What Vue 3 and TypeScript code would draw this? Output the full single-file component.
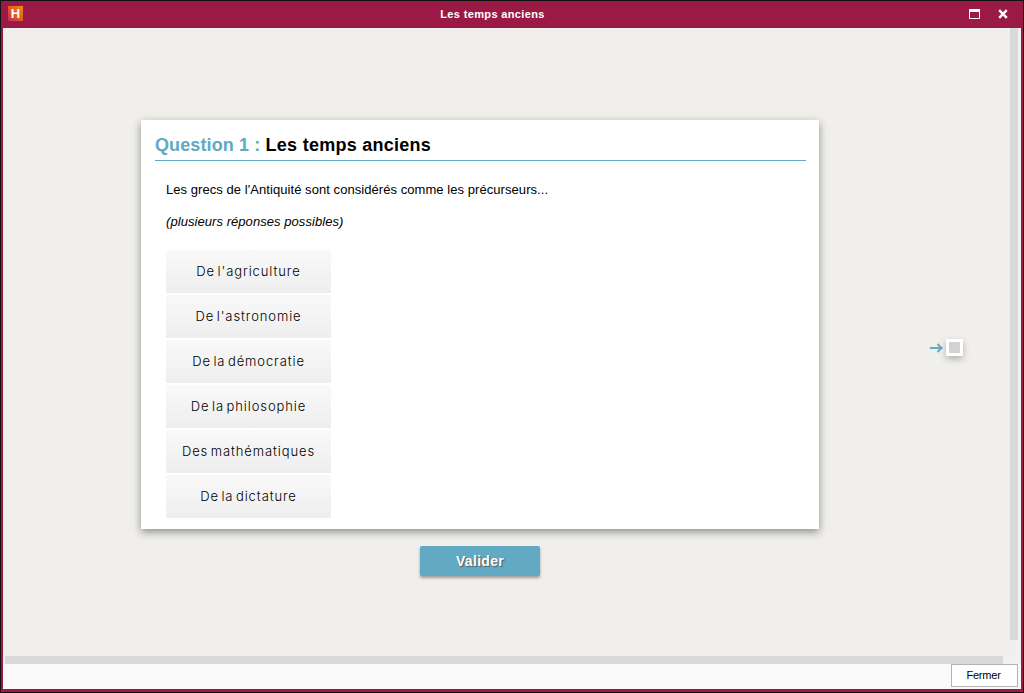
<script setup lang="ts">
const answers: string[] = [
  "De l'agriculture",
  "De l'astronomie",
  'De la démocratie',
  'De la philosophie',
  'Des mathématiques',
  'De la dictature',
]
</script>

<template>
  <div class="window">
    <header class="titlebar">
      <span class="logo">H</span>
      <span class="title">Les temps anciens</span>
      <div class="controls">
        <svg width="11" height="10" viewBox="0 0 11 10"><path d="M.5.5h10v9H.5z" fill="none" stroke="#fff"/><path d="M0 0h11v3H0z" fill="#fff"/></svg>
        <svg width="10" height="10" viewBox="0 0 10 10"><path d="M1.2 1.2l7.6 7.6M8.8 1.2L1.2 8.8" stroke="#fff" stroke-width="2.4" fill="none"/></svg>
      </div>
    </header>
    <div class="body">
      <div class="content">
        <main class="canvas">
          <div class="column">
            <section class="card">
              <h1 class="heading"><span class="num">Question 1 : </span>Les temps anciens</h1>
              <p class="prompt">Les grecs de l'Antiquité sont considérés comme les précurseurs...</p>
              <p class="hint">(plusieurs réponses possibles)</p>
              <ul class="answers">
                <li v-for="a in answers" :key="a" class="answer">{{ a }}</li>
              </ul>
            </section>
            <button class="validate">Valider</button>
          </div>
          <div class="marker">
            <svg width="13" height="10" viewBox="0 0 13 10"><path d="M0 5h11M7.5 1l4 4-4 4" fill="none" stroke="#62a9c4" stroke-width="2"/></svg>
            <span class="square"></span>
          </div>
        </main>
        <div class="vscroll"><div class="vthumb"></div></div>
      </div>
      <div class="hscroll"><div class="hthumb"></div></div>
      <footer class="footer">
        <button class="close">Fermer</button>
      </footer>
    </div>
  </div>
</template>

<style>
html, body { margin: 0; padding: 0; overflow: hidden; }
</style>

<style scoped>
.window {
  box-sizing: border-box;
  width: 1024px;
  height: 693px;
  display: flex;
  flex-direction: column;
  background: #9b1a45;
  border: 1px solid #111;
  font-family: "Liberation Sans", Arial, sans-serif;
  color: #000;
}
.titlebar {
  height: 27px;
  flex: none;
  display: flex;
  align-items: center;
  justify-content: center;
  position: relative;
}
.logo {
  position: absolute;
  left: 7px;
  top: 5px;
  width: 15px;
  height: 15px;
  background: linear-gradient(45deg, #c22a5a, #e2631c 55%, #e88f1e);
  color: #fff;
  font: bold 13px/15px "Liberation Sans", sans-serif;
  text-align: center;
}
.title {
  color: #fff;
  font-size: 11px;
  font-weight: bold;
  letter-spacing: 0.35px;
  margin: -2px 0 0 -39px;
}
.controls {
  position: absolute;
  right: 15px;
  top: 8px;
  display: flex;
  gap: 18px;
  align-items: center;
}
.body {
  flex: 1;
  min-height: 0;
  margin: 0 2px 3px 2px;
  display: flex;
  flex-direction: column;
  background: #f9f9f9;
}
.content {
  flex: 1;
  min-height: 0;
  display: flex;
  background: #f0efeb;
}
.canvas {
  flex: 1;
  display: flex;
  align-items: center;
  padding: 12px 0 0 138px;
}
.column {
  width: 678px;
  display: flex;
  flex-direction: column;
  align-items: center;
}
.card {
  box-sizing: border-box;
  width: 678px;
  height: 409px;
  background: #fff;
  padding: 13px 13px 11px 14px;
  box-shadow: 0 3px 8px rgba(60, 60, 50, 0.55);
}
.heading {
  margin: 0;
  height: 27px;
  font-size: 18px;
  line-height: 24px;
  font-weight: bold;
  letter-spacing: 0.26px;
  border-bottom: 1px solid #62a9c4;
}
.num { color: #62a9c4; letter-spacing: 0.12px; }
.prompt, .hint {
  margin: 0 0 0 11px;
  font-size: 13px;
  line-height: 14px;
  letter-spacing: 0.06px;
}
.prompt { margin-top: 22px; }
.hint { margin-top: 18px; font-style: italic; }
.answers {
  list-style: none;
  margin: 21px 0 0 11px;
  padding: 0;
  width: 165px;
  display: flex;
  flex-direction: column;
  gap: 2px;
}
.answer {
  height: 43px;
  line-height: 42px;
  text-align: center;
  font-family: Inter, sans-serif;
  font-size: 13px;
  font-weight: 300;
  letter-spacing: 0.9px;
  word-spacing: -2px;
  color: #000;
  background: linear-gradient(#f9f9f9, #eeeeee);
}
.validate {
  width: 120px;
  height: 30px;
  margin-top: 17px;
  border: 0;
  border-radius: 2px;
  background: #62a9c4;
  color: #fff;
  font: bold 14px "Liberation Sans", sans-serif;
  letter-spacing: 0.3px;
  text-shadow: 1px 1px 1px #555;
  box-shadow: 0 2px 3px rgba(60, 60, 50, 0.45);
  padding: 0;
}
.marker {
  margin: -1px 0 0 111px;
  display: flex;
  align-items: center;
  gap: 3px;
}
.square {
  box-sizing: border-box;
  width: 17px;
  height: 17px;
  background: #d2d2d2;
  border: 3px solid #fff;
  box-shadow: 0 3px 6px rgba(60, 60, 50, 0.35);
}
.vscroll {
  flex: none;
  width: 11px;
  background: #f0f0f0;
}
.vthumb {
  width: 8px;
  height: 612px;
  background: #d8d9d9;
}
.hscroll {
  flex: none;
  height: 8px;
  padding-left: 2px;
  background: #f0f0f0;
}
.hthumb {
  width: 998px;
  height: 8px;
  background: #d8d9d9;
}
.footer {
  flex: none;
  height: 25px;
  display: flex;
  justify-content: flex-end;
  align-items: flex-start;
  background: #f9f9f9;
}
.close {
  box-sizing: border-box;
  width: 67px;
  height: 23px;
  margin-right: 3px;
  background: #fff;
  border: 1px solid #b4b4b4;
  font: 11px "Liberation Sans", sans-serif;
  letter-spacing: -0.2px;
  color: #000;
  padding: 0 2px 2px 0;
}
</style>
